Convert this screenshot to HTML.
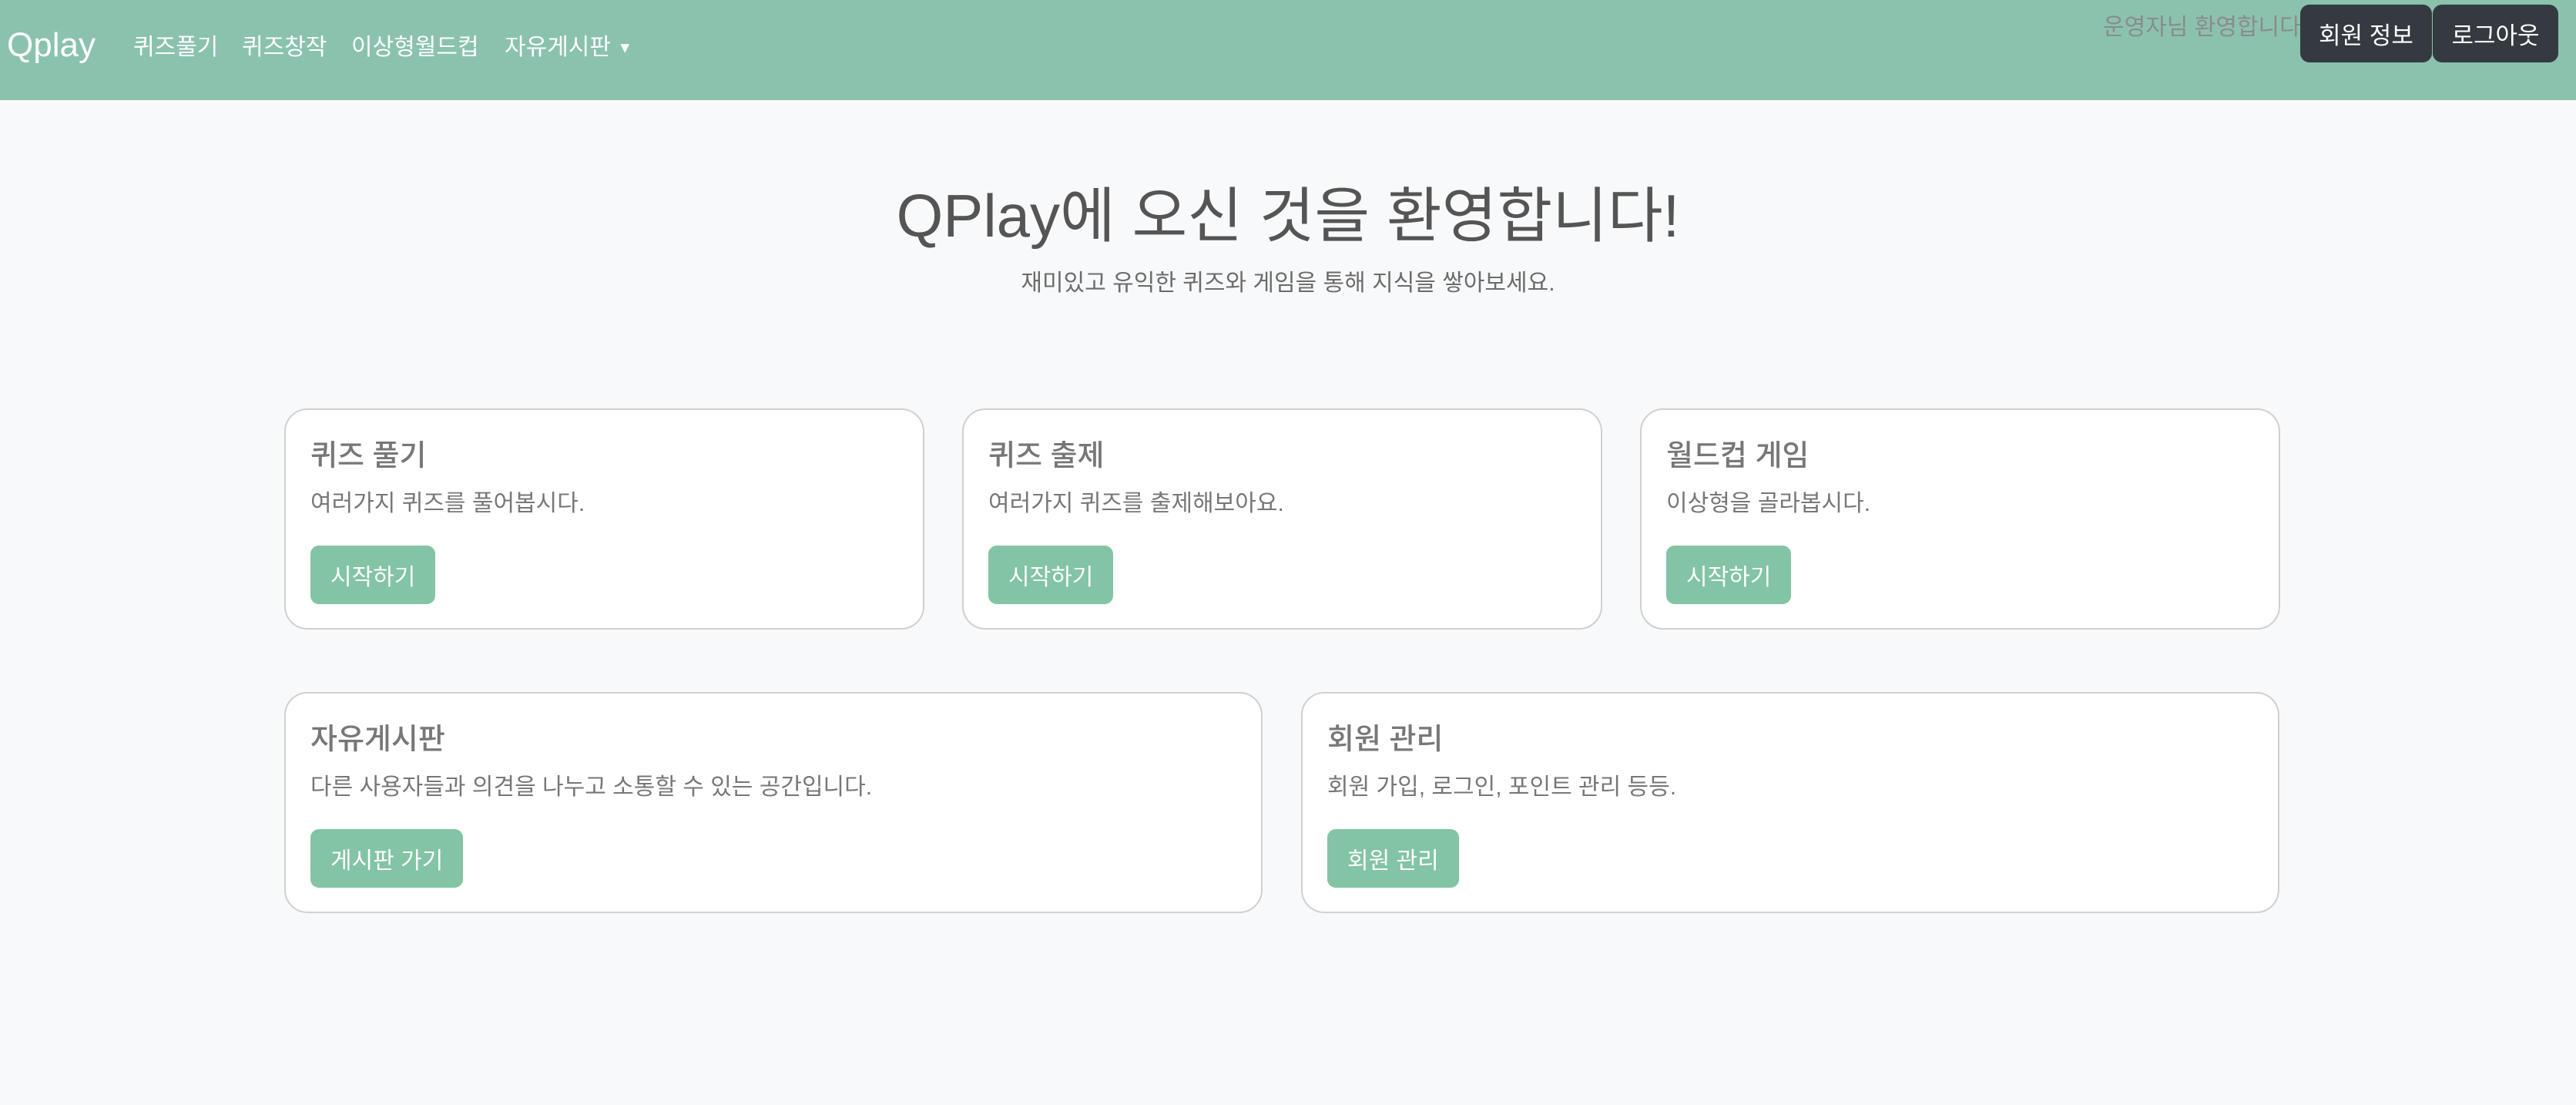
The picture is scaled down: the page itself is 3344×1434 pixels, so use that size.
<!DOCTYPE html>
<html><head><meta charset="utf-8"><style>
*{box-sizing:border-box;margin:0;padding:0}
body{width:3344px;height:1434px;background:#f8f9fa;font-family:"Liberation Sans","Noto Sans CJK KR",sans-serif;color:#6c6c6c;position:relative;overflow:hidden}
.nav{position:absolute;left:0;top:0;width:3344px;height:130px;background:#8ac2ae}
.brand{position:absolute;left:9px;top:34px;font-size:44px;color:#fff}
.link{position:absolute;top:36px;font-size:30px;color:#fff}
.welcome{position:absolute;left:2730px;top:10px;font-size:30px;color:#8b8b8b;white-space:nowrap}
.nbtn{position:absolute;top:6px;height:75px;background:#343a40;color:#fff;font-size:31px;border-radius:12px;display:flex;align-items:center;justify-content:center;white-space:nowrap}
h1{position:absolute;left:0;width:3344px;top:218px;text-align:center;font-size:78px;font-weight:400;color:#555}
.sub{position:absolute;left:0;width:3344px;top:342px;text-align:center;font-size:30px;color:#6c6c6c}
.card{position:absolute;background:#fff;border:2px solid #d0d0d0;border-radius:30px;height:287px}
.card h5{position:absolute;left:32px;top:28px;font-size:38px;font-weight:500;color:#777}
.card p{position:absolute;left:32px;top:96px;font-size:30px;color:#777}
.card .b{position:absolute;left:32px;top:176px;height:76px;padding:0 26px;background:#82c4a4;color:#fff;font-size:30px;border-radius:11px;display:flex;align-items:center}
</style></head><body>
<div class="nav">
<div class="brand">Qplay</div>
<div class="link" style="left:173px">퀴즈풀기</div>
<div class="link" style="left:314px">퀴즈창작</div>
<div class="link" style="left:456px">이상형월드컵</div>
<div class="link" style="left:655px">자유게시판 <span style="font-size:20px;vertical-align:middle">▼</span></div>
<div class="welcome">운영자님 환영합니다</div>
<div class="nbtn" style="left:2986px;width:171px">회원 정보</div>
<div class="nbtn" style="left:3158px;width:163px">로그아웃</div>
</div>
<h1>QPlay에 오신 것을 환영합니다!</h1>
<div class="sub">재미있고 유익한 퀴즈와 게임을 통해 지식을 쌓아보세요.</div>
<div class="card" style="left:369px;top:530px;width:831px"><h5>퀴즈 풀기</h5><p>여러가지 퀴즈를 풀어봅시다.</p><div class="b">시작하기</div></div>
<div class="card" style="left:1249px;top:530px;width:831px"><h5>퀴즈 출제</h5><p>여러가지 퀴즈를 출제해보아요.</p><div class="b">시작하기</div></div>
<div class="card" style="left:2129px;top:530px;width:831px"><h5>월드컵 게임</h5><p>이상형을 골라봅시다.</p><div class="b">시작하기</div></div>
<div class="card" style="left:369px;top:898px;width:1270px"><h5>자유게시판</h5><p>다른 사용자들과 의견을 나누고 소통할 수 있는 공간입니다.</p><div class="b">게시판 가기</div></div>
<div class="card" style="left:1689px;top:898px;width:1270px"><h5>회원 관리</h5><p>회원 가입, 로그인, 포인트 관리 등등.</p><div class="b">회원 관리</div></div>
</body></html>
